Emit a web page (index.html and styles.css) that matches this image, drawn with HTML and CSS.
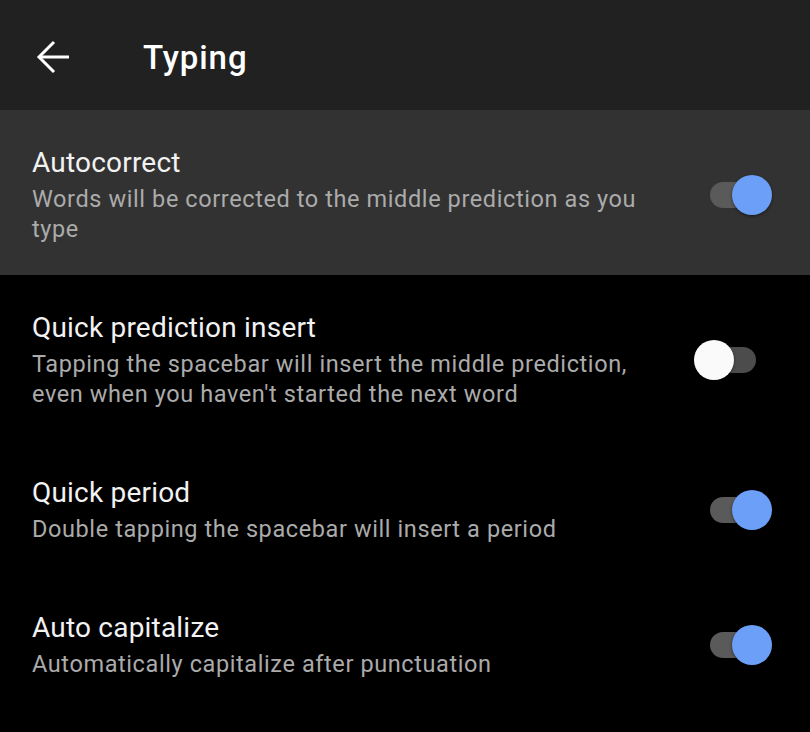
FILE: index.html
```html
<!DOCTYPE html>
<html>
<head>
<meta charset="utf-8">
<link rel="stylesheet" href="styles.css">
</head>
<body>
<header class="appbar">
  <svg class="back" width="34" height="34" viewBox="0 0 34 34">
    <path d="M33 18H3" />
    <path d="M18 3L3 18L18 33" />
  </svg>
  <h1 class="title">Typing</h1>
</header>
<main class="list">
  <div class="row row-active">
    <div class="text">
      <div class="label">Autocorrect</div>
      <div class="desc">Words will be corrected to the middle prediction as you type</div>
    </div>
    <div class="switch on"><span class="track"></span><span class="thumb"></span></div>
  </div>
  <div class="row">
    <div class="text">
      <div class="label">Quick prediction insert</div>
      <div class="desc">Tapping the spacebar will insert the middle prediction, even when you haven't started the next word</div>
    </div>
    <div class="switch"><span class="track"></span><span class="thumb"></span></div>
  </div>
  <div class="row">
    <div class="text">
      <div class="label">Quick period</div>
      <div class="desc">Double tapping the spacebar will insert a period</div>
    </div>
    <div class="switch on"><span class="track"></span><span class="thumb"></span></div>
  </div>
  <div class="row">
    <div class="text">
      <div class="label">Auto capitalize</div>
      <div class="desc">Automatically capitalize after punctuation</div>
    </div>
    <div class="switch on"><span class="track"></span><span class="thumb"></span></div>
  </div>
</main>
</body>
</html>
```
FILE: styles.css
```css
html, body {
  margin: 0;
  padding: 0;
  background: #000;
  font-family: Roboto, "Noto Sans", sans-serif;
}
.appbar {
  height: 110px;
  background: #212121;
  display: flex;
  align-items: center;
  box-sizing: border-box;
  padding-left: 36px;
}
.back {
  fill: none;
  stroke: #fff;
  stroke-width: 3;
  margin-top: 2px;
}
.title {
  margin: 4px 0 0 73px;
  font-size: 33px;
  font-weight: 500;
  color: #fff;
  letter-spacing: 0.9px;
}
.list {
  display: flex;
  flex-direction: column;
}
.row {
  display: flex;
  align-items: center;
  padding: 36px 38px 31px 32px;
}
.row-active {
  background: #323232;
}
.text {
  width: 650px;
}
.label {
  font-size: 28px;
  line-height: 34px;
  color: #f2f2f2;
  letter-spacing: 0.2px;
}
.desc {
  margin-top: 4px;
  font-size: 23.5px;
  line-height: 30px;
  color: #ababab;
  letter-spacing: 0.6px;
}
.switch {
  position: relative;
  margin-left: auto;
  width: 78px;
  height: 40px;
  flex-shrink: 0;
}
.track {
  position: absolute;
  left: 16px;
  top: 7px;
  width: 46px;
  height: 26px;
  border-radius: 13px;
  background: #4c4c4c;
}
.switch.on .track {
  background: #5a5a5a;
}
.thumb {
  position: absolute;
  top: 0;
  left: 0;
  width: 40px;
  height: 40px;
  border-radius: 50%;
  background: #fafafa;
  box-shadow: 0 1px 3px rgba(0,0,0,0.5);
}
.switch.on .thumb {
  left: 38px;
  background: #6ca0f8;
}
```
